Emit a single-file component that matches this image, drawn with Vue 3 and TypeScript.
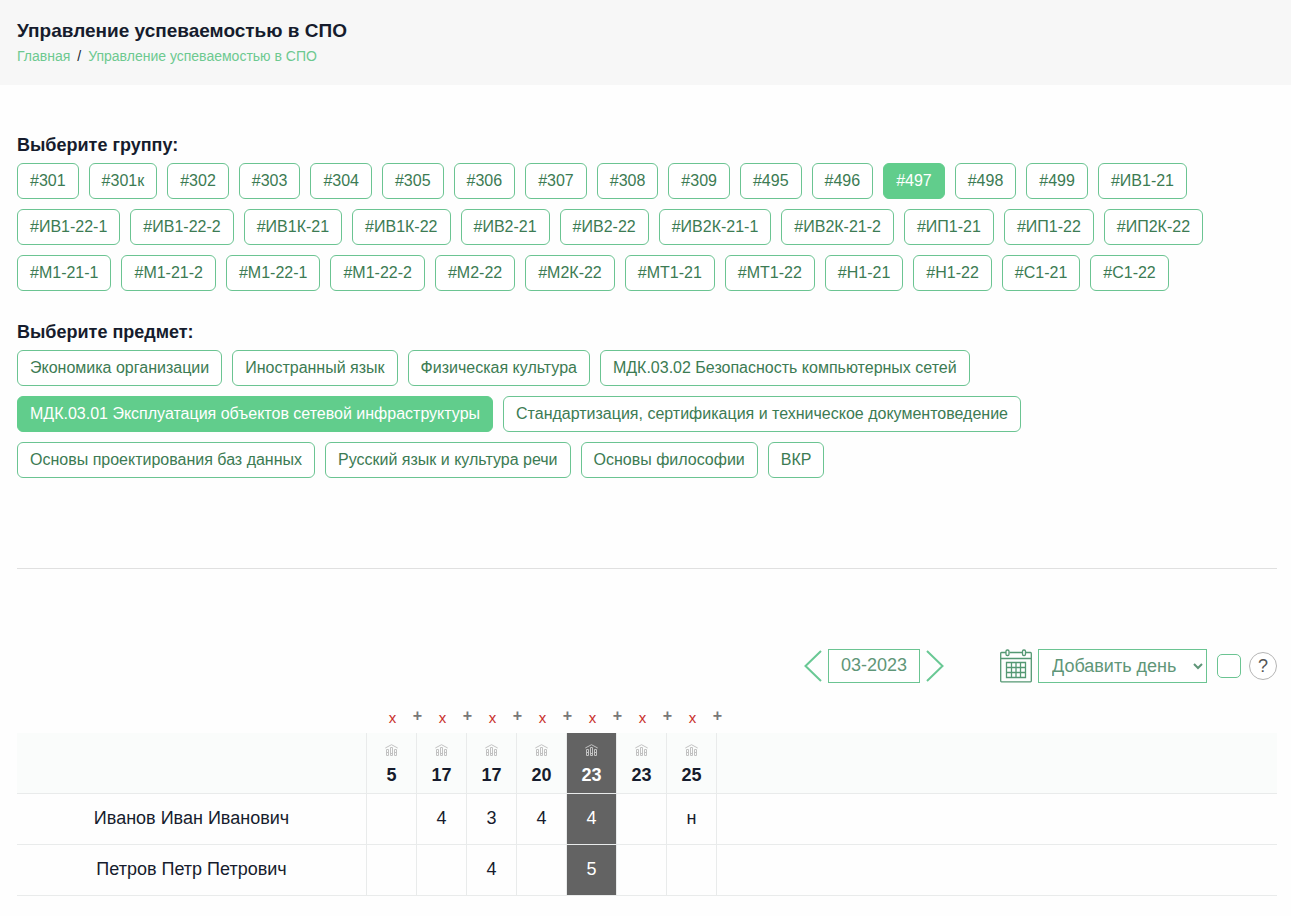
<script setup lang="ts">
import { ref } from 'vue'

interface Day {
  date: string
}

interface Student {
  name: string
  marks: string[]
}

const groups: string[] = [
  '#301', '#301к', '#302', '#303', '#304', '#305', '#306', '#307', '#308', '#309',
  '#495', '#496', '#497', '#498', '#499', '#ИВ1-21', '#ИВ1-22-1', '#ИВ1-22-2',
  '#ИВ1К-21', '#ИВ1К-22', '#ИВ2-21', '#ИВ2-22', '#ИВ2К-21-1', '#ИВ2К-21-2',
  '#ИП1-21', '#ИП1-22', '#ИП2К-22', '#М1-21-1', '#М1-21-2', '#М1-22-1', '#М1-22-2',
  '#М2-22', '#М2К-22', '#МТ1-21', '#МТ1-22', '#Н1-21', '#Н1-22', '#С1-21', '#С1-22',
]

const subjects: string[] = [
  'Экономика организации',
  'Иностранный язык',
  'Физическая культура',
  'МДК.03.02 Безопасность компьютерных сетей',
  'МДК.03.01 Эксплуатация объектов сетевой инфраструктуры',
  'Стандартизация, сертификация и техническое документоведение',
  'Основы проектирования баз данных',
  'Русский язык и культура речи',
  'Основы философии',
  'ВКР',
]

const days: Day[] = ['5', '17', '17', '20', '23', '23', '25'].map((date) => ({ date }))

const students: Student[] = [
  { name: 'Иванов Иван Иванович', marks: ['', '4', '3', '4', '4', '', 'н'] },
  { name: 'Петров Петр Петрович', marks: ['', '', '4', '', '5', '', ''] },
]

const activeGroup = ref('#497')
const activeSubject = ref(subjects[4])
const activeDay = ref(4)
const allDays = ref(false)
</script>

<template>
  <div class="page">
    <header class="head">
      <h1>Управление успеваемостью в СПО</h1>
      <nav class="crumbs">
        <a href="#">Главная</a>
        <span>/</span>
        <a href="#">Управление успеваемостью в СПО</a>
      </nav>
    </header>

    <main class="content">
      <section class="picker">
        <h2>Выберите группу:</h2>
        <div class="chips">
          <button
            v-for="g in groups"
            :key="g"
            type="button"
            class="chip"
            :class="{ active: g === activeGroup }"
            @click="activeGroup = g"
          >{{ g }}</button>
        </div>
      </section>

      <section class="picker">
        <h2>Выберите предмет:</h2>
        <div class="chips">
          <button
            v-for="s in subjects"
            :key="s"
            type="button"
            class="chip"
            :class="{ active: s === activeSubject }"
            @click="activeSubject = s"
          >{{ s }}</button>
        </div>
      </section>

      <hr class="rule">

      <div class="toolbar">
        <div class="month">
          <button type="button" class="arrow" aria-label="Предыдущий месяц">
            <svg width="18" height="32" viewBox="0 0 18 32"><path d="M17 1 L1.500 16 L17 31" /></svg>
          </button>
          <button type="button" class="current">03-2023</button>
          <button type="button" class="arrow" aria-label="Следующий месяц">
            <svg width="18" height="32" viewBox="0 0 18 32"><path d="M1 1 L16.500 16 L1 31" /></svg>
          </button>
        </div>
        <div class="adding">
          <svg class="calendar" width="32" height="34" viewBox="0 0 32 34">
            <path d="M6 3.500H1.500Q.700 3.500 .700 4.500V32Q.700 32.800 1.500 32.800H30.500Q31.300 32.800 31.300 32V4.500Q31.300 3.500 30.500 3.500H26M9.500 3.500H22.500M.700 9.500H31.300" />
            <rect x="6" y="1" width="3" height="5.500" rx="1.300" />
            <rect x="22.500" y="1" width="3" height="5.500" rx="1.300" />
            <path d="M6.500 13.500H25.500V28.500H6.500ZM11.500 13.500V28.500M16 13.500V28.500M20.500 13.500V28.500M6.500 18.500H25.500M6.500 23.500H25.500" />
          </svg>
          <select class="add-day" aria-label="Добавить день">
            <option>Добавить день</option>
          </select>
          <input v-model="allDays" class="tick" type="checkbox" aria-label="Все дни">
          <button type="button" class="help">?</button>
        </div>
      </div>

      <div class="day-actions">
        <template v-for="(d, i) in days" :key="i">
          <button type="button" class="remove">x</button>
          <button type="button" class="insert">+</button>
        </template>
      </div>

      <table class="journal">
        <thead>
          <tr>
            <th class="name"></th>
            <th
              v-for="(d, i) in days"
              :key="i"
              class="day"
              :class="{ selected: i === activeDay }"
              @click="activeDay = i"
            >
              <svg class="stat" width="13" height="12" viewBox="0 0 13 12">
                <path d="M.300 4 L6.500 .700 L12.700 4" />
                <path d="M1.500 5.500H3.500V11.500H1.500ZM5.500 3.500H7.500V11.500H5.500ZM9.500 5.500H11.500V11.500H9.500ZM1.500 8.500H3.500M9.500 8.500H11.500M5.500 9.500H7.500" />
              </svg>
              <span>{{ d.date }}</span>
            </th>
            <th class="rest"></th>
          </tr>
        </thead>
        <tbody>
          <tr v-for="s in students" :key="s.name">
            <td class="name">{{ s.name }}</td>
            <td
              v-for="(m, i) in s.marks"
              :key="i"
              class="day"
              :class="{ selected: i === activeDay }"
            >{{ m }}</td>
            <td class="rest"></td>
          </tr>
        </tbody>
      </table>
    </main>
  </div>
</template>

<style>
body {
  margin: 0;
  background: #fefefe;
}
</style>

<style scoped>
.page {
  font-family: "Liberation Sans", Arial, sans-serif;
  color: #161c2d;
}

button,
select,
input {
  margin: 0;
  font-family: inherit;
}

.head {
  padding: 18px 17px 17px;
  background: #f7f7f7;
}

h1 {
  margin: 0;
  font-size: 19px;
  line-height: 26px;
}

.crumbs {
  display: flex;
  gap: 7px;
  font-size: 14px;
  line-height: 24px;
}

.crumbs a {
  color: #6dc990;
  text-decoration: none;
}

.content {
  padding: 48px 14px 20px 17px;
}

.picker {
  margin-bottom: 29px;
}

h2 {
  margin: 0 0 6px;
  font-size: 18px;
  line-height: 24px;
}

.chips {
  display: flex;
  flex-wrap: wrap;
  gap: 10px;
}

.chip {
  height: 36px;
  padding: 0 12px;
  border: 1px solid #6bc492;
  border-radius: 6px;
  background: #fff;
  color: #3c7b53;
  font-size: 16px;
  line-height: 24px;
}

.chip.active {
  border-color: #61cd8c;
  background: #61cd8c;
  color: #fff;
}

.rule {
  height: 1px;
  margin: 90px 0 80px;
  border: 0;
  background: #e0e0e0;
}

.toolbar {
  display: flex;
  justify-content: flex-end;
  align-items: center;
  gap: 56px;
}

.month,
.adding {
  display: flex;
  align-items: center;
}

.month {
  gap: 6px;
}

.arrow {
  display: flex;
  padding: 0;
  border: 0;
  background: none;
}

.arrow path {
  fill: none;
  stroke: #69c894;
  stroke-width: 2;
}

.current {
  height: 34px;
  padding: 0 12px 2px;
  border: 1px solid #6bc492;
  background: #fff;
  color: #5f9678;
  font-size: 18px;
}

.calendar {
  margin-right: 6px;
  fill: none;
  stroke: #549873;
  stroke-width: 1.3;
}

.add-day {
  width: 169px;
  height: 34px;
  margin-right: 10px;
  padding: 0 0 0 9px;
  border: 1px solid #6bc492;
  border-radius: 0;
  background: #fff;
  color: #5f9678;
  font-size: 18px;
}

.tick {
  width: 24px;
  height: 24px;
  margin-right: 8px;
  border: 1px solid #6bc492;
  border-radius: 5px;
  background: #fff;
  appearance: none;
}

.tick:checked {
  background: #61cd8c;
}

.help {
  width: 28px;
  height: 28px;
  padding: 0;
  border: 1px solid #b5b5b5;
  border-radius: 50%;
  background: #fff;
  color: #555;
  font-size: 18px;
}

.day-actions {
  display: flex;
  margin-top: 22px;
  padding-left: 363px;
}

.day-actions button {
  width: 25px;
  height: 24px;
  padding: 0;
  border: 0;
  background: none;
}

.day-actions .remove {
  color: #c9302c;
  font-size: 15px;
}

.day-actions .insert {
  padding-bottom: 2px;
  color: #777;
  font-size: 16px;
  font-weight: 700;
}

.journal {
  width: 100%;
  margin-top: 4px;
  border-spacing: 0;
  table-layout: fixed;
  font-size: 18px;
  text-align: center;
}

.journal th,
.journal td {
  height: 50px;
  padding: 0;
  border-right: 1px solid #e9ebeb;
  border-bottom: 1px solid #e9ebeb;
  line-height: 24px;
}

.journal td {
  height: 48px;
  padding-bottom: 2px;
}

.journal th {
  height: 60px;
  background: #fafcfb;
}

.journal .name {
  width: 349px;
}

.journal .day {
  width: 49px;
}

.journal .rest {
  border-right: 0;
}

.journal .selected {
  background: #636363;
  color: #fff;
}

.stat {
  display: block;
  margin: 5px auto 7px;
  fill: none;
  stroke: #c2c2c2;
  stroke-width: 1;
}

.journal th span {
  display: block;
}
</style>
